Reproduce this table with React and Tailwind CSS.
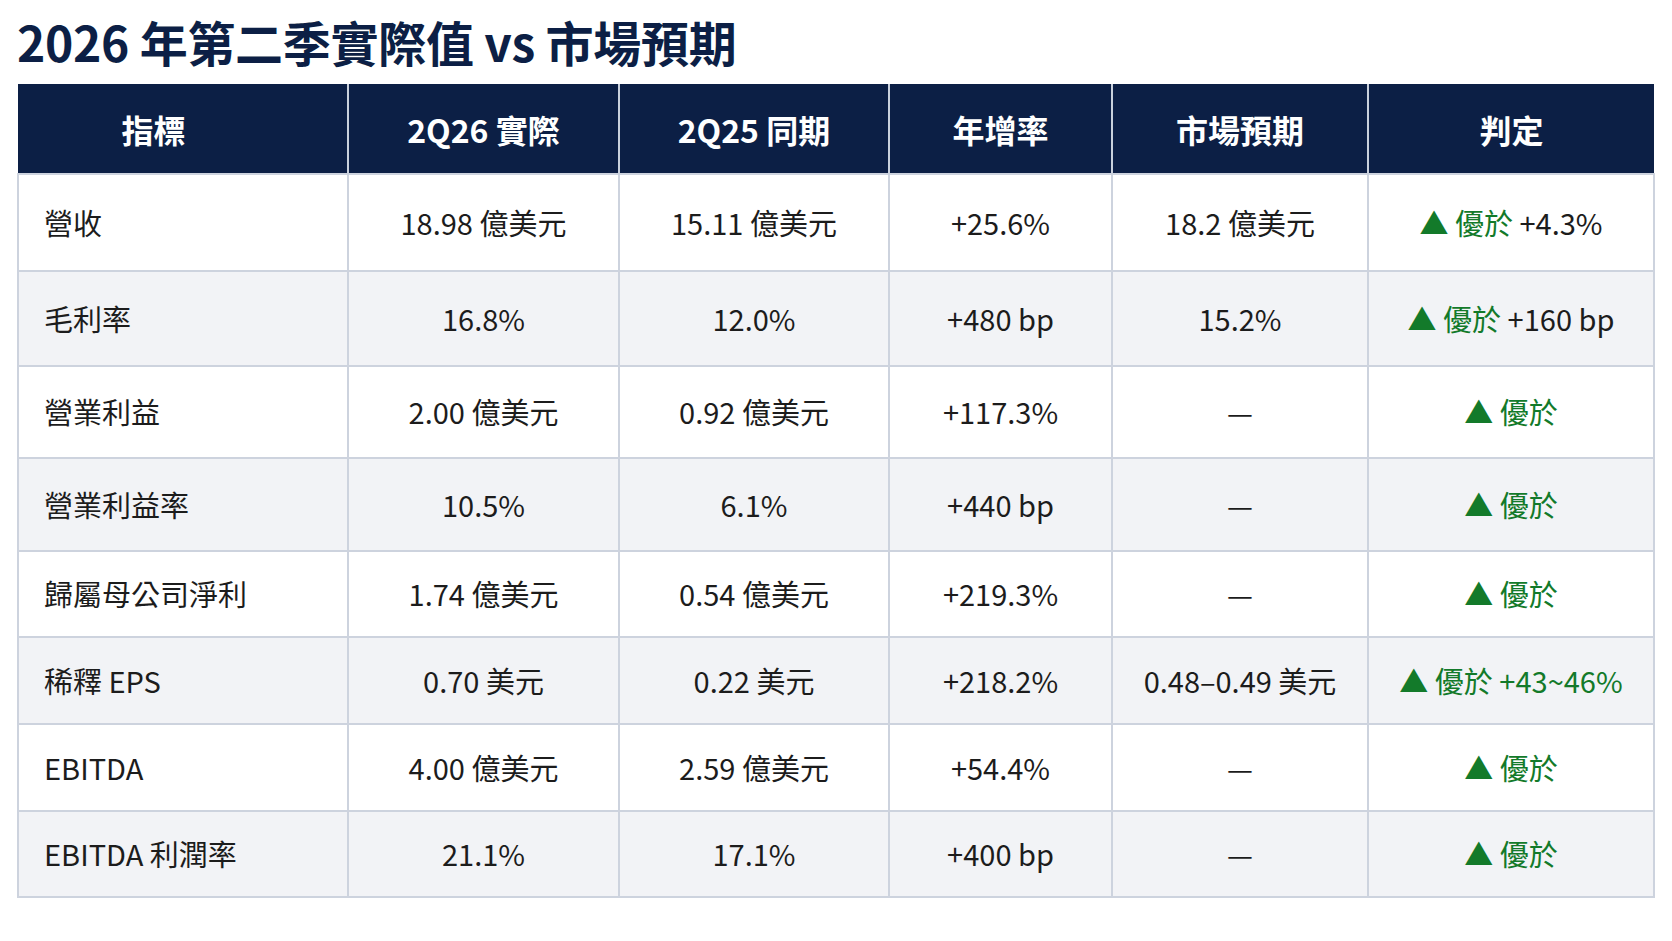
import React from 'react'

const font = { fontFamily: '"Noto Sans CJK TC", "Noto Sans", sans-serif' }

const rows = [
  { h: 'h-[97px]', name: '營收', actual: '18.98 億美元', prior: '15.11 億美元', yoy: '+25.6%', exp: '18.2 億美元', extra: '+4.3%', extraGreen: false },
  { h: 'h-[95px]', name: '毛利率', actual: '16.8%', prior: '12.0%', yoy: '+480 bp', exp: '15.2%', extra: '+160 bp', extraGreen: false },
  { h: 'h-[92px]', name: '營業利益', actual: '2.00 億美元', prior: '0.92 億美元', yoy: '+117.3%', exp: '—' },
  { h: 'h-[93px]', name: '營業利益率', actual: '10.5%', prior: '6.1%', yoy: '+440 bp', exp: '—' },
  { h: 'h-[86px]', name: '歸屬母公司淨利', actual: '1.74 億美元', prior: '0.54 億美元', yoy: '+219.3%', exp: '—' },
  { h: 'h-[87px]', name: '稀釋 EPS', actual: '0.70 美元', prior: '0.22 美元', yoy: '+218.2%', exp: '0.48–0.49 美元', extra: '+43~46%', extraGreen: true },
  { h: 'h-[87px]', name: 'EBITDA', actual: '4.00 億美元', prior: '2.59 億美元', yoy: '+54.4%', exp: '—' },
  { h: 'h-[86px]', name: 'EBITDA 利潤率', actual: '21.1%', prior: '17.1%', yoy: '+400 bp', exp: '—' },
]

const headers = ['指標', '2Q26 實際', '2Q25 同期', '年增率', '市場預期', '判定']

export default function App() {
  return (
    <div className="min-h-screen bg-white pl-[17px] pt-[12px]" style={font}>
      <h1 className="text-[48px] font-bold text-[#0c1f45] leading-[58px] tracking-[-0.3px]">
        2026 年第二季實際值 vs 市場預期
      </h1>
      <table className="mt-[14px] border-collapse table-fixed w-[1636px] text-[29px] text-[#1c1c1c]">
        <colgroup>
          <col className="w-[330px]" />
          <col className="w-[271px]" />
          <col className="w-[270px]" />
          <col className="w-[223px]" />
          <col className="w-[256px]" />
          <col className="w-[286px]" />
        </colgroup>
        <thead>
          <tr className="h-[90px] bg-[#0c1f45]">
            {headers.map((t) => (
              <th key={t} className="border-x-2 border-[#c9d0dc] first:border-l-0 first:pr-[58px] last:border-r-0 text-white font-bold text-[32px] text-center">
                {t}
              </th>
            ))}
          </tr>
        </thead>
        <tbody>
          {rows.map((r, i) => (
            <tr key={r.name} className={`${r.h} ${i % 2 === 1 ? 'bg-[#f2f3f6]' : 'bg-white'}`}>
              <td className="border-2 border-[#cdd3de] pl-[25px] text-left">{r.name}</td>
              <td className="border-2 border-[#cdd3de] text-center">{r.actual}</td>
              <td className="border-2 border-[#cdd3de] text-center">{r.prior}</td>
              <td className="border-2 border-[#cdd3de] text-center">{r.yoy}</td>
              <td className="border-2 border-[#cdd3de] text-center">{r.exp}</td>
              <td className="border-2 border-[#cdd3de] text-center whitespace-nowrap">
                <span className="text-[#137a2a]">▲ 優於</span>
                {r.extra && (
                  <span className={r.extraGreen ? 'text-[#137a2a]' : ''}> {r.extra}</span>
                )}
              </td>
            </tr>
          ))}
        </tbody>
      </table>
    </div>
  )
}
